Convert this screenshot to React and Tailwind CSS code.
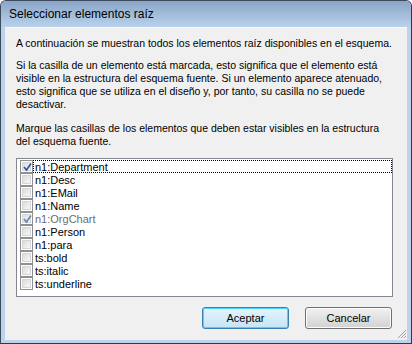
import { useState } from "react";

const items = [
  { name: "n1:Department", checked: true },
  { name: "n1:Desc", checked: false },
  { name: "n1:EMail", checked: false },
  { name: "n1:Name", checked: false },
  { name: "n1:OrgChart", checked: true, disabled: true },
  { name: "n1:Person", checked: false },
  { name: "n1:para", checked: false },
  { name: "ts:bold", checked: false },
  { name: "ts:italic", checked: false },
  { name: "ts:underline", checked: false },
];

function CheckBox({ checked, disabled }) {
  return (
    <div className="w-[13px] h-[13px] border border-[#8e8f8f] bg-white p-[1px] shrink-0">
      <div className="w-full h-full border border-[#d6d6d6] bg-gradient-to-br from-[#dcdcdc] to-[#f8f8f8] relative">
        {checked && (
          <svg
            className="absolute left-[-1px] top-[-1px]"
            width="11"
            height="11"
            viewBox="0 0 11 11"
          >
            <path
              d="M2 5 L4.5 8 L9 1.5"
              fill="none"
              stroke={disabled ? "#6f87b5" : "#3c5a9a"}
              strokeWidth="1.8"
            />
          </svg>
        )}
      </div>
    </div>
  );
}

function ListRow({ item, focused, onToggle }) {
  return (
    <div
      className="flex items-center h-[13px] pl-[3px] cursor-default"
      onClick={() => !item.disabled && onToggle()}
    >
      <CheckBox checked={item.checked} disabled={item.disabled} />
      <div
        className={
          "flex-1 h-[13px] leading-[12px] pl-[1px] text-[11px] border border-dotted " +
          (focused ? "border-black" : "border-transparent") +
          (item.disabled ? " text-[#6d6d6d]" : " text-black")
        }
      >
        {item.name}
      </div>
    </div>
  );
}

export default function App() {
  const [rows, setRows] = useState(items);

  function toggle(idx) {
    const copy = [...rows];
    copy[idx] = { ...copy[idx], checked: !copy[idx].checked };
    setRows(copy);
  }

  return (
    <div
      className="w-[412px] h-[344px] flex flex-col bg-[#bcd3eb] border border-[#3c4a5c] border-r-[#2a3a48] border-b-[#2a3a48] rounded-t-[6px] overflow-hidden"
      style={{ fontFamily: '"Liberation Sans", Arial, sans-serif' }}
    >
      {/* title bar */}
      <div className="h-[26px] shrink-0 flex items-center pl-[8px] bg-gradient-to-b from-[#8aa5c6] to-[#b9d2ec] text-[12px] text-black">
        Seleccionar elementos raíz
      </div>

      <div className="flex-1 flex flex-col mx-[4px] mb-[3px] bg-[#f0f0f0] text-[10.5px] leading-[13px] text-black px-[11px] pt-[10px] shadow-[inset_0_1px_0_#f7f7f7] whitespace-nowrap">
        <p>A continuación se muestran todos los elementos raíz disponibles en el esquema.</p>
        <p className="mt-[9px]">
          Si la casilla de un elemento está marcada, esto significa que el elemento está
          <br />
          visible en la estructura del esquema fuente. Si un elemento aparece atenuado,
          <br />
          esto significa que se utiliza en el diseño y, por tanto, su casilla no se puede
          <br />
          desactivar.
        </p>
        <p className="mt-[11px]">
          Marque las casillas de los elementos que deben estar visibles en la estructura
          <br />
          del esquema fuente.
        </p>

        <div className="mt-[10px] h-[139px] mr-[3px] border border-[#828790] bg-white pt-[1px]">
          {rows.map((item, idx) => (
            <ListRow
              key={item.name}
              item={item}
              focused={idx === 0}
              onToggle={() => toggle(idx)}
            />
          ))}
        </div>

        <div className="flex justify-end gap-[16px] mt-[10px] mr-[4px]">
          <button
            type="button"
            className="w-[87px] h-[22px] rounded-[3px] border border-[#3c7fb1] bg-gradient-to-b from-[#e5f4fc] to-[#c4e5f6] shadow-[inset_0_0_0_1px_#48d4fb] text-[11px] text-black"
          >
            Aceptar
          </button>
          <button
            type="button"
            className="w-[87px] h-[22px] rounded-[3px] border border-[#707070] bg-gradient-to-b from-[#f2f2f2] to-[#d2d2d2] shadow-[inset_0_0_0_1px_#fcfcfc] text-[11px] text-black"
          >
            Cancelar
          </button>
        </div>

        <div className="flex justify-end mt-auto mr-[-11px] mb-[1px]">
          <svg width="10" height="10" viewBox="0 0 10 10">
            <path d="M9 1 L1 9 M9 4 L4 9 M9 7 L7 9" stroke="#a0a0a0" strokeWidth="1" />
          </svg>
        </div>
      </div>
    </div>
  );
}
